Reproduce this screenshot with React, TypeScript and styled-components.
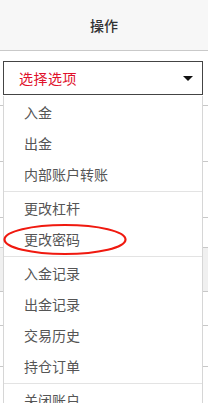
import React from "react";
import styled, { createGlobalStyle } from "styled-components";

const GlobalStyle = createGlobalStyle`
  html, body {
    margin: 0;
    padding: 0;
    background: #fff;
    overflow: hidden;
  }
  body {
    font-family: "Noto Sans CJK SC", "Noto Sans", sans-serif;
  }
`;

const menuGroups = [
  ["入金", "出金", "内部账户转账"],
  ["更改杠杆", "更改密码"],
  ["入金记录", "出金记录", "交易历史", "持仓订单"],
  ["关闭账户"],
];

const bgRows = [55, 55, 29, 43, 33, 40, 40, 40];

export default function App() {
  return (
    <>
      <GlobalStyle />
      <Page>
        <Header>操作</Header>
        <Cell>
          <SelectBox>
            <SelectText>选择选项</SelectText>
            <Caret />
          </SelectBox>
        </Cell>
        <BgTable>
          {bgRows.map((h, i) => (
            <BgRow key={i} $h={h} $shaded={i === 3} />
          ))}
        </BgTable>
        <Menu>
          {menuGroups.map((group, gi) => (
            <Group key={gi} $last={gi === menuGroups.length - 1}>
              {group.map((item) => (
                <Item key={item}>{item}</Item>
              ))}
            </Group>
          ))}
        </Menu>
        <Circle viewBox="0 0 208 403" width="208" height="403">
          <ellipse
            cx="65"
            cy="239.5"
            rx="60.5"
            ry="14.5"
            fill="none"
            stroke="#f0190f"
            strokeWidth="2.2"
          />
        </Circle>
      </Page>
    </>
  );
}

const Page = styled.div`
  position: relative;
  width: 208px;
  height: 403px;
  overflow: hidden;
`;

const Header = styled.div`
  height: 50px;
  background: #f7f7f7;
  border-bottom: 1px solid #c9c9c9;
  display: flex;
  align-items: center;
  justify-content: center;
  font-size: 14px;
  font-weight: 500;
  color: #333;
`;

const Cell = styled.div`
  padding: 10px 5px 0 3px;
`;

const SelectBox = styled.div`
  height: 32px;
  border: 1px solid #444;
  display: flex;
  align-items: center;
  justify-content: space-between;
  padding: 0 9px 0 15px;
`;

const SelectText = styled.span`
  color: #e0102a;
  font-size: 14px;
  letter-spacing: 0.5px;
`;

const Caret = styled.span`
  width: 0;
  height: 0;
  border-left: 5px solid transparent;
  border-right: 5px solid transparent;
  border-top: 5px solid #111;
  margin-top: 1px;
`;

const BgTable = styled.div`
  margin-top: 10px;
`;

const BgRow = styled.div<{ $h: number; $shaded: boolean }>`
  height: ${(p) => p.$h}px;
  border-top: 1px solid #c8c8c8;
  background: ${(p) => (p.$shaded ? "#f0f0f0" : "#fff")};
`;

const Menu = styled.div`
  position: absolute;
  top: 96px;
  left: 3px;
  width: 198px;
  background: #fff;
  border-left: 1px solid #d6d6d6;
  border-right: 1px solid #d6d6d6;
`;

const Group = styled.div<{ $last: boolean }>`
  border-bottom: ${(p) => (p.$last ? "none" : "1px solid #e3e3e3")};
  padding-bottom: 2px;
`;

const Item = styled.div`
  height: 31px;
  display: flex;
  align-items: center;
  padding-left: 20px;
  font-size: 14px;
  color: #555;
`;

const Circle = styled.svg`
  position: absolute;
  top: 0;
  left: 0;
  pointer-events: none;
`;
